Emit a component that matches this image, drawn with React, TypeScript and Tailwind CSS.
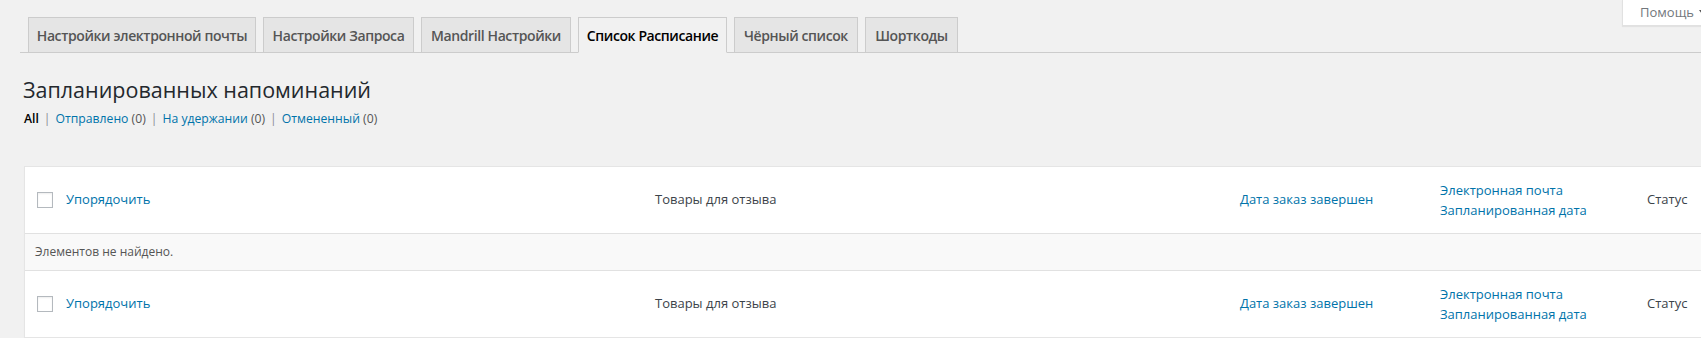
import React from "react";

const tabs = [
  { label: "Настройки электронной почты", w: "w-[228px]" },
  { label: "Настройки Запроса", w: "w-[151px]" },
  { label: "Mandrill Настройки", w: "w-[150px]" },
  { label: "Список Расписание", w: "w-[149px]", active: true },
  { label: "Чёрный список", w: "w-[124px]" },
  { label: "Шорткоды", w: "w-[93px]" },
];

const Checkbox = () => (
  <span className="block w-4 h-4 border border-[#b4b9be] bg-white shadow-[inset_0_1px_2px_rgba(0,0,0,0.07)]" />
);

// thead / tfoot share the same markup
const HeaderRow = ({ bottom }: { bottom?: boolean }) => (
  <div
    className={`grid grid-cols-[33px_587px_587px_200px_205px_1fr] items-center h-[67px] bg-white ${
      bottom ? "border-t border-[#e1e1e1]" : "border-b border-[#e1e1e1]"
    }`}
  >
    <div className="pl-[12px]">
      <Checkbox />
    </div>
    <div className="px-2">
      <a className="text-[#0073aa] cursor-pointer">Упорядочить</a>
    </div>
    <div className="px-[10px] text-[#3c434a]">Товары для отзыва</div>
    <div className="px-2">
      <a className="text-[#0073aa] cursor-pointer">Дата заказ завершен</a>
    </div>
    <div className="px-2 leading-[20px]">
      <a className="text-[#0073aa] cursor-pointer">
        Электронная почта
        <br />
        Запланированная дата
      </a>
    </div>
    <div className="px-[10px] text-[#3c434a]">Статус</div>
  </div>
);

export default function App() {
  return (
    <div
      className="relative w-[1701px] h-[338px] overflow-hidden bg-[#f1f1f1] text-[#444]"
      style={{ fontFamily: '"Open Sans", "Noto Sans", sans-serif' }}
    >
      {/* help tab */}
      <div className="absolute top-0 left-[1622px] w-[100px] h-[26px] pl-[17px] flex items-center gap-[5px] bg-white border border-t-0 border-[#e1e1e1] shadow-[0_1px_1px_rgba(0,0,0,0.06)] text-[13px] text-[#72777c] whitespace-nowrap">
        <span>Помощь</span>
        <svg width="9" height="6" viewBox="0 0 9 6" className="shrink-0">
          <path d="M0 0h9L4.5 6z" fill="#555" />
        </svg>
      </div>

      <div className="pl-5 pt-[17px]">
        {/* nav tabs */}
        <nav className="flex border-b border-[#ccc] h-[36px]">
          {tabs.map((t) => (
            <a
              key={t.label}
              className={`${t.w} ml-[7px] first:ml-2 h-[36px] flex items-center justify-center border text-[14px] font-semibold whitespace-nowrap tracking-[-0.4px] ${
                t.active
                  ? "bg-[#f1f1f1] border-[#ccc] border-b-[#f1f1f1] text-black"
                  : "bg-[#e5e5e5] border-[#ccc] text-[#555]"
              }`}
            >
              {t.label}
            </a>
          ))}
        </nav>

        <h1 className="mt-[22px] ml-[3px] text-[21.5px] leading-[30px] text-[#23282d] font-normal">
          Запланированных напоминаний
        </h1>

        <ul className="mt-[4px] ml-[4px] flex items-center text-[12.2px] leading-[20px] text-[#555]">
          <li>
            <span className="font-semibold text-black">All</span>
            <span className="mx-[5px] text-[#8c8f94]">|</span>
          </li>
          <li>
            <a className="text-[#0073aa]">Отправлено</a> <span>(0)</span>
            <span className="mx-[5px] text-[#8c8f94]">|</span>
          </li>
          <li>
            <a className="text-[#0073aa]">На удержании</a> <span>(0)</span>
            <span className="mx-[5px] text-[#8c8f94]">|</span>
          </li>
          <li>
            <a className="text-[#0073aa]">Отмененный</a> <span>(0)</span>
          </li>
        </ul>

        {/* list table */}
        <div className="mt-[37px] ml-1 w-[1720px] border border-[#e5e5e5] shadow-[0_1px_1px_rgba(0,0,0,0.04)] text-[13px]">
          <HeaderRow />
          <div className="h-[36px] flex items-center px-[10px] bg-[#f9f9f9] text-[12px] text-[#555]">
            Элементов не найдено.
          </div>
          <HeaderRow bottom />
        </div>
      </div>
    </div>
  );
}
